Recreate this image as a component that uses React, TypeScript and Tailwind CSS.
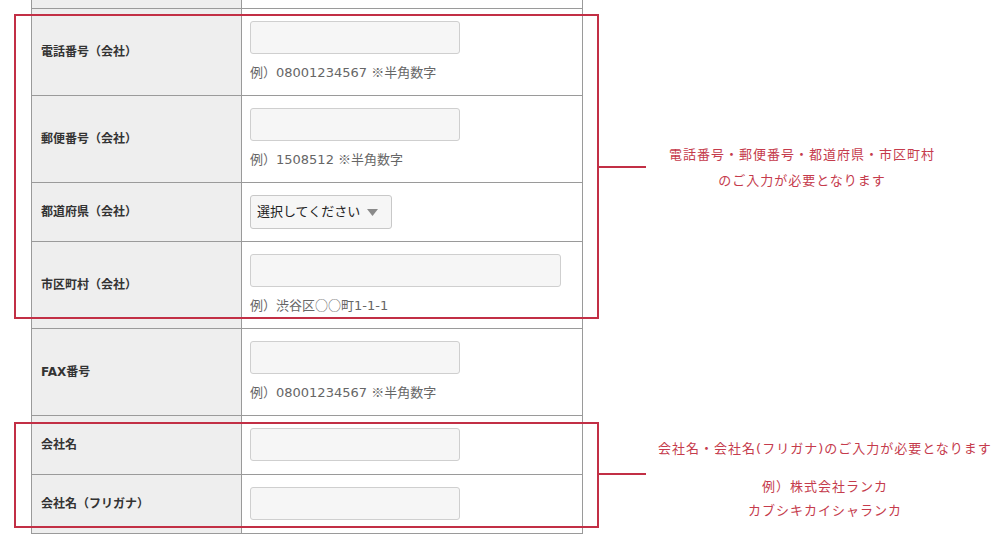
import React from 'react';

type Row = {
  label: string;
  kind: 'input' | 'wide' | 'select';
  hint?: React.ReactNode;
};

const cjk = { fontFamily: '"Noto Sans CJK JP", sans-serif' };

const rows: Row[] = [
  {
    label: '電話番号（会社）',
    kind: 'input',
    hint: (
      <>
        例）08001234567 <span style={cjk}>※</span>半角数字
      </>
    ),
  },
  {
    label: '郵便番号（会社）',
    kind: 'input',
    hint: (
      <>
        例）1508512 <span style={cjk}>※</span>半角数字
      </>
    ),
  },
  { label: '都道府県（会社）', kind: 'select' },
  {
    label: '市区町村（会社）',
    kind: 'wide',
    hint: (
      <>
        例）渋谷区<span style={cjk}>○○</span>町1-1-1
      </>
    ),
  },
  {
    label: 'FAX番号',
    kind: 'input',
    hint: (
      <>
        例）08001234567 <span style={cjk}>※</span>半角数字
      </>
    ),
  },
  { label: '会社名', kind: 'input' },
  { label: '会社名（フリガナ）', kind: 'input' },
];

const font = { fontFamily: '"DejaVu Sans", "Noto Sans CJK JP", sans-serif' };

function FormRow({ row }: { row: Row }) {
  return (
    <div className="flex border-b border-[#9a9a9a]">
      <div className="w-[210px] shrink-0 bg-[#eeeeee] border-r border-[#9a9a9a] flex items-center pl-[9px] text-[12px] font-bold text-[#333]">
        {row.label}
      </div>
      <div className={`flex-1 pl-[8px] pt-[12px] ${row.kind === 'select' ? 'pb-[12px]' : 'pb-[13px]'}`}>
        {row.kind === 'select' ? (
          <div className="w-[142px] h-[34px] bg-[#f6f6f6] border border-[#c8c8c8] rounded-[3px] flex items-center pl-[6px] text-[13px] text-[#222]">
            選択してください
            <svg width="11" height="7" viewBox="0 0 11 7" className="ml-[7px]">
              <path d="M0 0 L11 0 L5.5 7 Z" fill="#8a8a8a" />
            </svg>
          </div>
        ) : (
          <div
            className={`${row.kind === 'wide' ? 'w-[311px]' : 'w-[210px]'} h-[33px] bg-[#f6f6f6] border border-[#cfcfcf] rounded-[3px]`}
          />
        )}
        {row.hint && <div className="mt-[8px] h-[20px] leading-[20px] text-[13px] text-[#666]">{row.hint}</div>}
      </div>
    </div>
  );
}

export default function App() {
  return (
    <div className="w-[991px] h-[554px] bg-white overflow-hidden flex" style={font}>
      <div className="relative w-[645px] shrink-0">
        <div className="ml-[31px] w-[552px] border-x border-[#9a9a9a]">
          {/* cut-off row from above */}
          <div className="flex h-[9px] border-b border-[#9a9a9a]">
            <div className="w-[210px] bg-[#eeeeee] border-r border-[#9a9a9a]" />
            <div className="flex-1" />
          </div>
          {rows.map((r) => (
            <FormRow key={r.label} row={r} />
          ))}
        </div>

        {/* callout frames */}
        <div className="absolute left-[14px] top-[14px] w-[585px] h-[305px] border-2 border-[#c22f45]">
          <div className="absolute -right-[49px] top-1/2 -translate-y-1/2 w-[47px] h-[2px] bg-[#c22f45]" />
        </div>
        <div className="absolute left-[14px] top-[422px] w-[585px] h-[106px] border-2 border-[#c22f45]">
          <div className="absolute -right-[49px] top-[49px] w-[47px] h-[2px] bg-[#c22f45]" />
        </div>
      </div>

      <div className="flex-1 flex flex-col text-[#c53b4c] text-[13px] tracking-[1px]">
        <div className="mt-[142px] w-[314px] text-center leading-[26px]">
          <p>電話番号・郵便番号・都道府県・市区町村</p>
          <p>のご入力が必要となります</p>
        </div>
        <div className="mt-[243px] w-[360px] text-center leading-[24px] whitespace-nowrap">
          <p className="mb-[14px]">会社名・会社名(フリガナ)のご入力が必要となります</p>
          <p>例）株式会社ランカ</p>
          <p>カブシキカイシャランカ</p>
        </div>
      </div>
    </div>
  );
}
